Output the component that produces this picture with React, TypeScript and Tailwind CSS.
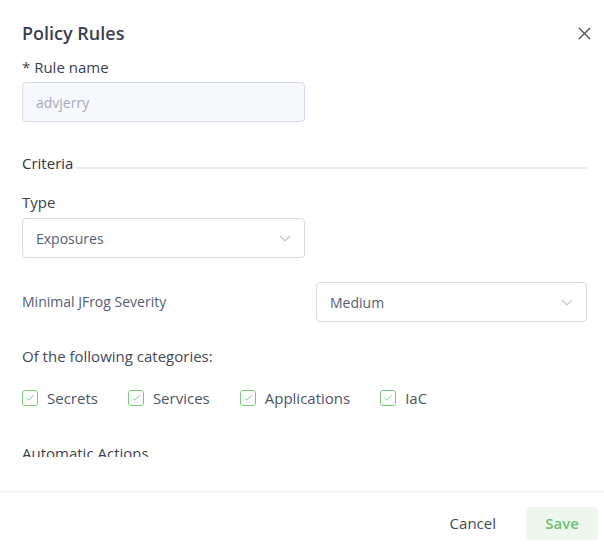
import { Check, X } from "lucide-react";

function Chevron() {
  return (
    <svg width="12" height="7" viewBox="0 0 12 7" fill="none" className="shrink-0">
      <path d="M1 1l5 5 5-5" stroke="#c3c7d3" strokeWidth="1.2" />
    </svg>
  );
}

function Select({ value, className }: { value: string; className?: string }) {
  return (
    <div className={`flex h-[40px] items-center justify-between rounded-[4px] border border-[#d6dae6] bg-white pl-[13px] pr-[13px] ${className ?? ""}`}>
      <span className="text-[14px] text-[#565d6f]">{value}</span>
      <Chevron />
    </div>
  );
}

function CheckItem({ label }: { label: string }) {
  return (
    <div className="flex items-center gap-[9px]">
      <div className="flex h-[16px] w-[16px] items-center justify-center rounded-[3px] border border-[#79c879] bg-white">
        <Check className="h-[10px] w-[10px] text-[#6cbf6c]" strokeWidth={2} />
      </div>
      <span className="text-[15px] font-medium leading-[20px] text-[#4d5465]">{label}</span>
    </div>
  );
}

export default function App() {
  return (
    <div className="flex h-[549px] w-[604px] flex-col bg-white font-['Open_Sans',sans-serif]">
      {/* Scrollable body */}
      <div className="h-[457px] overflow-hidden pl-[22px] pr-[17px] pt-[20px]">
        <div className="flex items-center justify-between">
          <h1 className="text-[18px] font-semibold leading-[26px] text-[#3b4050]">Policy Rules</h1>
          <X className="-mr-[8px] h-[21px] w-[21px] text-[#474c5b]" strokeWidth={1.4} />
        </div>

        <div className="mt-[11px] text-[15px] font-medium leading-[20px] text-[#3a3f4e]">* Rule name</div>
        <div className="mt-[5px] flex h-[40px] w-[283px] items-center rounded-[4px] border border-[#d6dae6] bg-[#f7f8fb] pl-[13px]">
          <span className="text-[14px] text-[#a5aabb]">advjerry</span>
        </div>

        <div className="mt-[31px] flex items-center gap-[4px]">
          <span className="text-[15px] font-medium leading-[20px] text-[#2f333d]">Criteria</span>
          <div className="mt-[9px] h-[2px] flex-1 bg-[#e8eaf0]" />
        </div>

        <div className="mt-[19px] text-[15px] font-medium leading-[20px] text-[#3a3f4e]">Type</div>
        <Select value="Exposures" className="mt-[6px] w-[283px]" />

        <div className="mt-[24px] flex items-center justify-between">
          <span className="text-[14px] leading-[20px] text-[#565d6f]">Minimal JFrog Severity</span>
          <Select value="Medium" className="w-[271px]" />
        </div>

        <div className="mt-[24px] text-[15px] font-medium leading-[20px] text-[#444a5a]">Of the following categories:</div>
        <div className="mt-[22px] flex items-center gap-[30px]">
          <CheckItem label="Secrets" />
          <CheckItem label="Services" />
          <CheckItem label="Applications" />
          <CheckItem label="IaC" />
        </div>

        <div className="mt-[35px] text-[15px] font-medium leading-[20px] text-[#3a3f4e]">Automatic Actions</div>
      </div>

      <div className="h-[34px]" />

      {/* Footer */}
      <div className="flex flex-1 items-center justify-end gap-[30px] border-t border-[#eceef3] pr-[6px] pt-[6px]">
        <span className="text-[15px] font-medium text-[#434958]">Cancel</span>
        <button className="h-[33px] w-[72px] rounded-[4px] bg-[#eef7ee] text-[15px] font-semibold text-[#6cbf6c]">
          Save
        </button>
      </div>
    </div>
  );
}
